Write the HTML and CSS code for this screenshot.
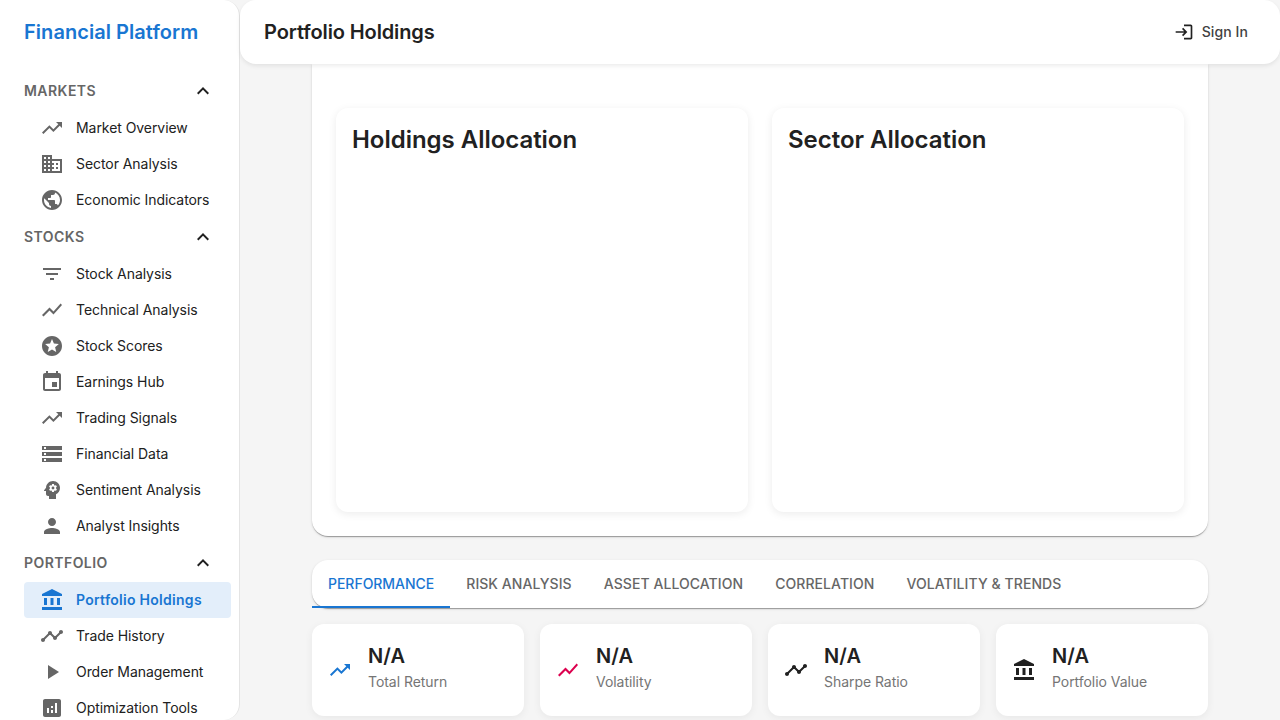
FILE: index.html
```html
<!DOCTYPE html>
<html lang="en">
<head>
<meta charset="utf-8">
<title>Portfolio Holdings</title>
<link rel="stylesheet" href="styles.css">
</head>
<body>
<div class="app">
  <aside class="sidebar">
    <div class="brand">Financial Platform</div>
    <nav class="nav">
      <div class="group"><span class="lab">MARKETS</span><svg class="chev" viewBox="0 0 24 24"><path d="M12 8l-6 6 1.41 1.41L12 10.83l4.59 4.58L18 14z"/></svg></div>
      <a class="item"><svg class="ico" viewBox="0 0 24 24"><path d="M16 6l2.29 2.29-4.88 4.88-4-4L2 16.59 3.41 18l6-6 4 4 6.3-6.29L22 12V6z"/></svg><span class="lab">Market Overview</span></a>
      <a class="item"><svg class="ico" viewBox="0 0 24 24"><path d="M12 7V3H2v18h20V7H12zM6 19H4v-2h2v2zm0-4H4v-2h2v2zm0-4H4V9h2v2zm0-4H4V5h2v2zm4 12H8v-2h2v2zm0-4H8v-2h2v2zm0-4H8V9h2v2zm0-4H8V5h2v2zm10 12h-8v-2h2v-2h-2v-2h2v-2h-2V9h8v10zm-2-8h-2v2h2v-2zm0 4h-2v2h2v-2z"/></svg><span class="lab">Sector Analysis</span></a>
      <a class="item"><svg class="ico" viewBox="0 0 24 24"><path d="M12 2C6.48 2 2 6.48 2 12s4.48 10 10 10 10-4.48 10-10S17.52 2 12 2zm-1 17.93c-3.95-.49-7-3.85-7-7.93 0-.62.08-1.21.21-1.79L9 15v1c0 1.1.9 2 2 2v1.93zm6.9-2.54c-.26-.81-1-1.39-1.9-1.39h-1v-3c0-.55-.45-1-1-1H8v-2h2c.55 0 1-.45 1-1V7h2c1.1 0 2-.9 2-2v-.41c2.93 1.19 5 4.06 5 7.41 0 2.08-.8 3.97-2.1 5.39z"/></svg><span class="lab">Economic Indicators</span></a>
      <div class="group"><span class="lab">STOCKS</span><svg class="chev" viewBox="0 0 24 24"><path d="M12 8l-6 6 1.41 1.41L12 10.83l4.59 4.58L18 14z"/></svg></div>
      <a class="item"><svg class="ico" viewBox="0 0 24 24"><path d="M10 18h4v-2h-4v2zM3 6v2h18V6H3zm3 7h12v-2H6v2z"/></svg><span class="lab">Stock Analysis</span></a>
      <a class="item"><svg class="ico" viewBox="0 0 24 24"><path d="M3.5 18.49l6-6.01 4 4L22 6.92l-1.41-1.41-7.09 7.97-4-4L2 16.99z"/></svg><span class="lab">Technical Analysis</span></a>
      <a class="item"><svg class="ico" viewBox="0 0 24 24"><path d="M11.99 2C6.47 2 2 6.48 2 12s4.47 10 9.99 10C17.52 22 22 17.52 22 12S17.52 2 11.99 2zm4.24 16L12 15.45 7.77 18l1.12-4.81-3.73-3.23 4.92-.42L12 5l1.92 4.53 4.92.42-3.73 3.23L16.23 18z"/></svg><span class="lab">Stock Scores</span></a>
      <a class="item"><svg class="ico" viewBox="0 0 24 24"><path d="M17 12h-5v5h5v-5zM16 1v2H8V1H6v2H5c-1.11 0-1.99.9-1.99 2L3 19c0 1.1.89 2 2 2h14c1.1 0 2-.9 2-2V5c0-1.1-.9-2-2-2h-1V1h-2zm3 18H5V8h14v11z"/></svg><span class="lab">Earnings Hub</span></a>
      <a class="item"><svg class="ico" viewBox="0 0 24 24"><path d="M16 6l2.29 2.29-4.88 4.88-4-4L2 16.59 3.41 18l6-6 4 4 6.3-6.29L22 12V6z"/></svg><span class="lab">Trading Signals</span></a>
      <a class="item"><svg class="ico" viewBox="0 0 24 24"><path d="M2 20h20v-4H2v4zm2-3h2v2H4v-2zM2 4v4h20V4H2zm4 3H4V5h2v2zm-4 7h20v-4H2v4zm2-3h2v2H4v-2z"/></svg><span class="lab">Financial Data</span></a>
      <a class="item"><svg class="ico" viewBox="0 0 24 24"><path d="M13 8.57c-.79 0-1.43.64-1.43 1.43s.64 1.43 1.43 1.43 1.43-.64 1.43-1.43-.64-1.43-1.43-1.43z"/><path d="M13 3C9.25 3 6.2 5.94 6.02 9.64L4.1 12.2c-.25.33-.01.8.4.8H6v3c0 1.1.9 2 2 2h1v3h7v-4.68c2.36-1.12 4-3.53 4-6.32 0-3.87-3.13-7-7-7zm3 7c0 .13-.01.26-.02.39l.83.66c.08.06.1.16.05.25l-.8 1.39c-.05.09-.16.12-.24.09l-.99-.4c-.21.16-.43.29-.67.39L14 13.83c-.01.1-.1.17-.2.17h-1.6c-.1 0-.18-.07-.2-.17l-.15-1.06c-.25-.1-.47-.23-.68-.39l-.99.4c-.09.03-.2 0-.25-.09l-.8-1.39c-.05-.08-.03-.19.05-.25l.84-.66c-.01-.13-.02-.26-.02-.39s.02-.27.04-.39l-.85-.66c-.08-.06-.1-.16-.05-.26l.8-1.38c.05-.09.15-.12.24-.09l1 .4c.2-.15.43-.29.67-.39L12 6.17c.02-.1.1-.17.2-.17h1.6c.1 0 .18.07.2.17l.15 1.06c.24.1.46.23.67.39l1-.4c.09-.03.2 0 .24.09l.8 1.38c.05.09.03.2-.05.26l-.85.66c.03.12.04.25.04.39z"/></svg><span class="lab">Sentiment Analysis</span></a>
      <a class="item"><svg class="ico" viewBox="0 0 24 24"><path d="M12 12c2.21 0 4-1.79 4-4s-1.79-4-4-4-4 1.79-4 4 1.79 4 4 4zm0 2c-2.67 0-8 1.34-8 4v2h16v-2c0-2.66-5.33-4-8-4z"/></svg><span class="lab">Analyst Insights</span></a>
      <div class="group"><span class="lab">PORTFOLIO</span><svg class="chev" viewBox="0 0 24 24"><path d="M12 8l-6 6 1.41 1.41L12 10.83l4.59 4.58L18 14z"/></svg></div>
      <a class="item active"><svg class="ico" viewBox="0 0 24 24"><path d="M4 10h3v7H4zm6.5 0h3v7h-3zM2 19h20v3H2zm15-9h3v7h-3zm-5-9L2 6v2h20V6z"/></svg><span class="lab">Portfolio Holdings</span></a>
      <a class="item"><svg class="ico" viewBox="0 0 24 24"><path d="M23 8c0 1.1-.9 2-2 2-.18 0-.35-.02-.51-.07l-3.56 3.55c.05.16.07.34.07.52 0 1.1-.9 2-2 2s-2-.9-2-2c0-.18.02-.36.07-.52l-2.55-2.55c-.16.05-.34.07-.52.07s-.36-.02-.52-.07l-4.55 4.56c.05.16.07.33.07.51 0 1.1-.9 2-2 2s-2-.9-2-2 .9-2 2-2c.18 0 .35.02.51.07l4.56-4.55C8.02 9.36 8 9.18 8 9c0-1.1.9-2 2-2s2 .9 2 2c0 .18-.02.36-.07.52l2.55 2.55c.16-.05.34-.07.52-.07s.36.02.52.07l3.55-3.56C19.02 8.35 19 8.18 19 8c0-1.1.9-2 2-2s2 .9 2 2z"/></svg><span class="lab">Trade History</span></a>
      <a class="item"><svg class="ico" viewBox="0 0 24 24"><path d="M8 5v14l11-7z"/></svg><span class="lab">Order Management</span></a>
      <a class="item"><svg class="ico" viewBox="0 0 24 24"><path d="M19 3H5c-1.1 0-2 .9-2 2v14c0 1.1.9 2 2 2h14c1.1 0 2-.9 2-2V5c0-1.1-.9-2-2-2zM9 17H7v-5h2v5zm4 0h-2v-3h2v3zm0-5h-2v-2h2v2zm4 5h-2V7h2v10z"/></svg><span class="lab">Optimization Tools</span></a>
    </nav>
  </aside>
  <div class="column">
    <header class="topbar">
      <h1 class="page-title">Portfolio Holdings</h1>
      <button class="signin"><svg class="signin-ico" viewBox="0 0 24 24"><path d="M11 7 9.6 8.4l2.6 2.6H2v2h10.2l-2.6 2.6L11 17l5-5-5-5zm9 12h-8v2h8c1.1 0 2-.9 2-2V5c0-1.1-.9-2-2-2h-8v2h8v14z"/></svg><span class="lab">Sign In</span></button>
    </header>
    <main class="main">
      <section class="outer">
        <div class="chart-card"><h2>Holdings Allocation</h2></div>
        <div class="chart-card"><h2>Sector Allocation</h2></div>
      </section>
      <div class="tabs">
        <div class="tab on"><span class="lab">PERFORMANCE</span></div>
        <div class="tab"><span class="lab">RISK ANALYSIS</span></div>
        <div class="tab"><span class="lab">ASSET ALLOCATION</span></div>
        <div class="tab"><span class="lab">CORRELATION</span></div>
        <div class="tab"><span class="lab">VOLATILITY &amp; TRENDS</span></div>
      </div>
      <div class="stats">
        <div class="stat"><svg class="stat-ico blue" viewBox="0 0 24 24"><path d="M16 6l2.29 2.29-4.88 4.88-4-4L2 16.59 3.41 18l6-6 4 4 6.3-6.29L22 12V6z"/></svg><div class="stat-text"><div class="val">N/A</div><div class="lbl">Total Return</div></div></div>
        <div class="stat"><svg class="stat-ico pink" viewBox="0 0 24 24"><path d="M3.5 18.49l6-6.01 4 4L22 6.92l-1.41-1.41-7.09 7.97-4-4L2 16.99z"/></svg><div class="stat-text"><div class="val">N/A</div><div class="lbl">Volatility</div></div></div>
        <div class="stat"><svg class="stat-ico" viewBox="0 0 24 24"><path d="M23 8c0 1.1-.9 2-2 2-.18 0-.35-.02-.51-.07l-3.56 3.55c.05.16.07.34.07.52 0 1.1-.9 2-2 2s-2-.9-2-2c0-.18.02-.36.07-.52l-2.55-2.55c-.16.05-.34.07-.52.07s-.36-.02-.52-.07l-4.55 4.56c.05.16.07.33.07.51 0 1.1-.9 2-2 2s-2-.9-2-2 .9-2 2-2c.18 0 .35.02.51.07l4.56-4.55C8.02 9.36 8 9.18 8 9c0-1.1.9-2 2-2s2 .9 2 2c0 .18-.02.36-.07.52l2.55 2.55c.16-.05.34-.07.52-.07s.36.02.52.07l3.55-3.56C19.02 8.35 19 8.18 19 8c0-1.1.9-2 2-2s2 .9 2 2z"/></svg><div class="stat-text"><div class="val">N/A</div><div class="lbl">Sharpe Ratio</div></div></div>
        <div class="stat"><svg class="stat-ico" viewBox="0 0 24 24"><path d="M4 10h3v7H4zm6.5 0h3v7h-3zM2 19h20v3H2zm15-9h3v7h-3zm-5-9L2 6v2h20V6z"/></svg><div class="stat-text"><div class="val">N/A</div><div class="lbl">Portfolio Value</div></div></div>
      </div>
    </main>
  </div>
</div>
</body>
</html>
```
FILE: styles.css
```css
* { box-sizing: border-box; }
html, body { margin: 0; height: 100%; overflow: hidden; }
body { font-family: Inter, "Liberation Sans", sans-serif; background: #f5f5f5; color: #212121; }
.app { display: flex; height: 720px; }
.lab { padding-bottom: 2px; }
.sidebar { width: 240px; flex: none; height: 720px; overflow: hidden; background: #fff; border-radius: 0 16px 16px 0; border-right: 1px solid #e4e4e4; }
.brand { height: 64px; padding: 0 24px; display: flex; align-items: center; font-size: 20px; font-weight: 600; letter-spacing: .05px; color: #1976d2; white-space: nowrap; }
.nav { padding: 8px 8px 0 24px; }
.group { height: 38px; display: flex; align-items: center; justify-content: space-between; padding-right: 16px; font-size: 14px; font-weight: 600; letter-spacing: .45px; color: #666; }
.chev { width: 24px; height: 24px; fill: #212121; }
.item { display: flex; align-items: center; gap: 12px; height: 36px; padding-left: 16px; border-radius: 4px; font-size: 14px; letter-spacing: -.06px; color: #212121; }
.ico { width: 24px; height: 24px; fill: #666; flex: none; }
.item.active { background: #e3eefa; color: #1976d2; font-weight: 600; letter-spacing: .28px; }
.item.active .ico { fill: #1976d2; }
.column { flex: 1; min-width: 0; display: flex; flex-direction: column; height: 720px; }
.topbar { height: 64px; flex: none; background: #fff; border-radius: 16px; box-shadow: 0 2px 4px rgba(0,0,0,.08); display: flex; align-items: center; justify-content: space-between; padding: 0 24px; position: relative; z-index: 2; }
.page-title { margin: 0; font-size: 20px; font-weight: 600; letter-spacing: -.11px; }
.signin { display: flex; align-items: center; gap: 8px; background: none; border: 0; padding: 0 8px 0 0; font: 500 14px Inter, sans-serif; letter-spacing: .1px; color: #424242; }
.signin-ico { width: 20px; height: 20px; fill: #212121; }
.main { flex: 1; overflow: hidden; padding: 0 72px; }
.outer { height: 472px; background: #fff; border-radius: 0 0 16px 16px; box-shadow: 0 2px 1px -1px rgba(0,0,0,.2), 0 1px 1px 0 rgba(0,0,0,.14), 0 1px 3px 0 rgba(0,0,0,.12); padding: 44px 24px 24px; display: grid; grid-template-columns: 1fr 1fr; gap: 24px; }
.chart-card { border-radius: 12px; background: #fff; box-shadow: 0 2px 8px rgba(0,0,0,.08); padding: 16px; }
.chart-card h2 { margin: 0; font-size: 24px; font-weight: 600; line-height: 32px; letter-spacing: -.03px; }
.tabs { margin-top: 24px; height: 48px; background: #fff; border-radius: 16px; box-shadow: 0 2px 1px -1px rgba(0,0,0,.2), 0 1px 1px 0 rgba(0,0,0,.14), 0 1px 3px 0 rgba(0,0,0,.12); display: flex; }
.tab { padding: 0 16px; display: flex; align-items: center; font-size: 14px; font-weight: 500; letter-spacing: .07px; color: #666; white-space: nowrap; }
.tab.on { color: #1976d2; border-bottom: 2px solid #1976d2; padding-top: 2px; letter-spacing: -.03px; }
.stats { margin-top: 16px; display: grid; grid-template-columns: repeat(4, 1fr); gap: 16px; }
.stat { height: 92px; background: #fff; border-radius: 12px; box-shadow: 0 2px 8px rgba(0,0,0,.06); display: flex; align-items: center; gap: 16px; padding-left: 16px; }
.stat-ico { width: 24px; height: 24px; fill: #212121; flex: none; }
.stat-ico.blue { fill: #1976d2; }
.stat-ico.pink { fill: #dc004e; }
.stat-text { padding-bottom: 4px; }
.val { font-size: 20px; font-weight: 600; line-height: 28px; letter-spacing: .1px; }
.lbl { font-size: 14px; line-height: 24px; letter-spacing: -.05px; color: #757575; }
```
